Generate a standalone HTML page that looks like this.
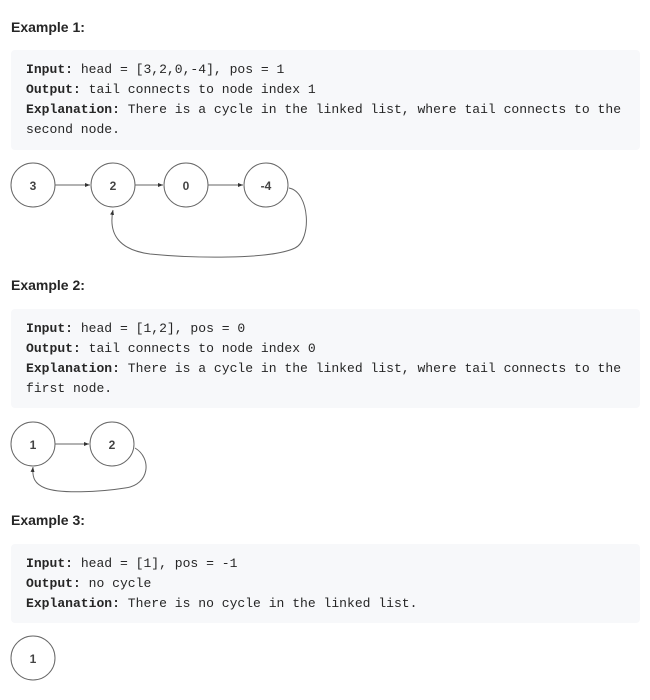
<!DOCTYPE html>
<html><head><meta charset="utf-8"><style>
body{margin:0;width:650px;height:700px;background:#fff;position:relative;font-family:"Liberation Sans",sans-serif;color:#262626;overflow:hidden}
h4{position:absolute;left:11px;margin:0;font-size:14px;font-weight:bold;line-height:20px;color:#262626}
.pre{position:absolute;left:11px;width:629px;background:#f7f8fa;border-radius:4px;box-sizing:border-box;padding:10px 15px;font-family:"Liberation Mono",monospace;font-size:13.05px;line-height:20px;color:#262626;white-space:pre}
.pre b{font-weight:bold}
svg{position:absolute;left:0}
svg text{font-family:"Liberation Sans",sans-serif;font-size:12px;font-weight:bold;fill:#444;text-anchor:middle}
</style></head><body>
<h4 style="top:17px">Example 1:</h4>
<div class="pre" style="top:50px;height:100px"><b>Input:</b> head = [3,2,0,-4], pos = 1
<b>Output:</b> tail connects to node index 1
<b>Explanation:</b> There is a cycle in the linked list, where tail connects to the
second node.</div>
<svg style="top:160px" width="330" height="105" viewBox="0 160 330 105">
<defs><marker id="a" markerWidth="6" markerHeight="6" refX="5" refY="3" orient="auto"><path d="M0,1 L5,3 L0,5z" fill="#333"/></marker></defs>
<g fill="none" stroke="#666" stroke-width="1">
<circle cx="33" cy="185" r="22"/><circle cx="113" cy="185" r="22"/><circle cx="186" cy="185" r="22"/><circle cx="266" cy="185" r="22"/>
<line x1="55" y1="185" x2="90" y2="185" marker-end="url(#a)"/>
<line x1="135" y1="185" x2="163" y2="185" marker-end="url(#a)"/>
<line x1="208" y1="185" x2="243" y2="185" marker-end="url(#a)"/>
<path d="M289,188 C310,192 312,240 295,248 C270,260 190,258 150,254 C120,250 108,235 113,210" marker-end="url(#a)"/>
</g>
<text x="33" y="190">3</text><text x="113" y="190">2</text><text x="186" y="190">0</text><text x="266" y="190">-4</text>
</svg>
<h4 style="top:275px">Example 2:</h4>
<div class="pre" style="top:309px;height:99px"><b>Input:</b> head = [1,2], pos = 0
<b>Output:</b> tail connects to node index 0
<b>Explanation:</b> There is a cycle in the linked list, where tail connects to the
first node.</div>
<svg style="top:418px" width="160" height="80" viewBox="0 418 160 80">
<g fill="none" stroke="#666" stroke-width="1">
<circle cx="33" cy="444" r="22"/><circle cx="112" cy="444" r="22"/>
<line x1="55" y1="444" x2="89" y2="444" marker-end="url(#a)"/>
<path d="M135,448 C152,458 150,485 125,488 C100,492 60,494 45,488 C35,484 32,478 33,467" marker-end="url(#a)"/>
</g>
<text x="33" y="449">1</text><text x="112" y="449">2</text>
</svg>
<h4 style="top:510px">Example 3:</h4>
<div class="pre" style="top:544px;height:79px"><b>Input:</b> head = [1], pos = -1
<b>Output:</b> no cycle
<b>Explanation:</b> There is no cycle in the linked list.</div>
<svg style="top:633px" width="70" height="55" viewBox="0 633 70 55">
<circle cx="33" cy="658" r="22" fill="none" stroke="#666"/>
<text x="33" y="663">1</text>
</svg>
</body></html>
